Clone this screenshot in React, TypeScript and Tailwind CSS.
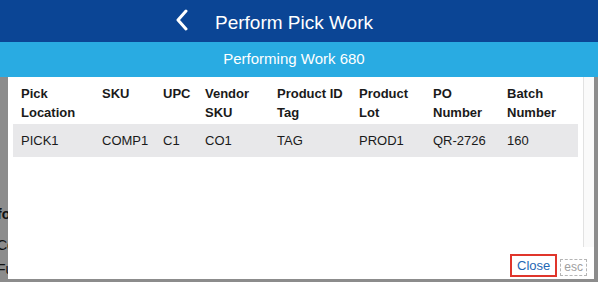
import React from "react";

const headers: [string, string][] = [
  ["Pick", "Location"],
  ["SKU", ""],
  ["UPC", ""],
  ["Vendor", "SKU"],
  ["Product ID", "Tag"],
  ["Product", "Lot"],
  ["PO", "Number"],
  ["Batch", "Number"],
];
const row = ["PICK1", "COMP1", "C1", "CO1", "TAG", "PROD1", "QR-2726", "160"];

export default function App() {
  return (
    <div
      className="w-[598px] h-[282px] overflow-hidden bg-[#8c8c8c] flex flex-col"
      style={{ fontFamily: '"Liberation Sans", Arial, sans-serif' }}
    >
      <div className="h-[42px] shrink-0 bg-[#0b4595] flex items-center justify-center pr-[10px] pt-[3px]">
        <div className="relative text-white text-[19px] leading-[22px]">
          <svg
            className="absolute left-[-40px] top-[-3px]"
            width="14"
            height="22"
            viewBox="0 0 14 22"
          >
            <polyline
              points="11,2 3,11 11,20"
              fill="none"
              stroke="white"
              strokeWidth="3"
              strokeLinecap="round"
              strokeLinejoin="round"
            />
          </svg>
          Perform Pick Work
        </div>
      </div>
      <div className="h-[35px] shrink-0 bg-[#29abe2] flex items-center justify-center pr-[10px] text-white text-[15px]">
        Performing Work 680
      </div>
      <div className="flex h-[202px] shrink-0">
        <div className="w-[8px] shrink-0 overflow-hidden relative text-[14px] text-[#111]">
          <div className="absolute left-[-3px] top-[127px] font-bold whitespace-nowrap">fo</div>
          <div className="absolute left-[-3px] top-[158px] whitespace-nowrap">Co</div>
          <div className="absolute left-[-3px] top-[182px] whitespace-nowrap">Fu</div>
        </div>
        <div className="w-[586px] shrink-0 bg-white flex flex-col">
          <div className="h-[170px] flex">
            <div className="w-[576px] border-r border-[#e2e2e2] pl-[5px] pr-[5px] text-[13px] leading-[19px] text-[#1a1a1a]">
              <div className="grid grid-cols-[81px_61px_42px_72px_82px_74px_74px_80px]">
                {headers.map((h, i) => (
                  <div key={i} className="font-bold pl-2 pt-[7px] pb-[2px] whitespace-nowrap">
                    <div>{h[0]}</div>
                    <div>{h[1] || "\u00a0"}</div>
                  </div>
                ))}
              </div>
              <div className="grid grid-cols-[81px_61px_42px_72px_82px_74px_74px_80px] bg-[#e8e8ea]">
                {row.map((c, i) => (
                  <div key={i} className="pl-2 pt-[7px] pb-[7px] whitespace-nowrap">
                    {c}
                  </div>
                ))}
              </div>
            </div>
            <div className="flex-1 bg-[#fafafa]" />
          </div>
          <div className="h-[32px] flex items-end justify-end pr-[7px] pb-[2px] gap-[3px]">
            <div className="border-2 border-[#e0352b] px-[5px] py-[2px] text-[13px] leading-[15px] text-[#2467b3]">
              Close
            </div>
            <div className="border border-dashed border-[#b5b5b5] px-[3px] text-[12px] leading-[15px] text-[#a0a0a0] mb-[1px]">
              esc
            </div>
          </div>
        </div>
        <div className="flex-1" />
      </div>
    </div>
  );
}
